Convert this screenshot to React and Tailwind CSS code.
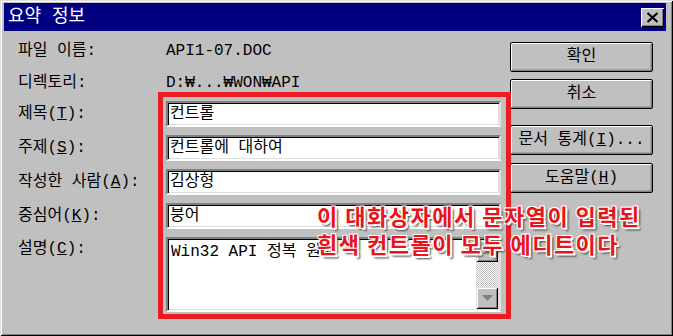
import React from "react";

const font = "font-['Liberation_Mono','Noto_Sans_CJK_KR',monospace]";

const Edit = ({ children }) => (
  <div className="w-[335px] h-[26px] bg-white border-2 border-t-[#808080] border-l-[#808080] border-b-white border-r-[#dfdfdf] shadow-[inset_1px_1px_#000,inset_-1px_-1px_#dfdfdf] flex items-center pl-[2px] text-[16px] text-black leading-none">
    {children}
  </div>
);

const Label = ({ children, className = "" }) => (
  <div className={`w-[148px] shrink-0 text-[16px] text-black leading-none ${className}`}>
    {children}
  </div>
);

const Button = ({ children, className = "" }) => (
  <button
    type="button"
    className={`w-[143px] h-[30px] bg-[#c0c0c0] border border-black rounded-[2px] shadow-[inset_1px_1px_#fff,inset_-1px_-1px_#808080,inset_-2px_-2px_#a0a0a0] flex items-center justify-center text-[16px] text-black leading-none ${className}`}
  >
    {children}
  </button>
);

const ScrollBtn = ({ up, className = "" }) => (
  <div
    className={`w-full h-[22px] bg-[#c0c0c0] shadow-[inset_1px_1px_#dfdfdf,inset_-1px_-1px_#000,inset_2px_2px_#fff,inset_-2px_-2px_#808080] flex items-center justify-center ${className}`}
  >
    <svg width="11" height="6" viewBox="0 0 11 6">
      {up ? (
        <path d="M5.5 0 L11 6 L0 6 Z" fill="#808080" />
      ) : (
        <path d="M0 0 L11 0 L5.5 6 Z" fill="#808080" />
      )}
    </svg>
  </div>
);

export default function App() {
  return (
    <div
      className={`${font} relative w-[673px] h-[336px] bg-[#c0c0c0] pt-[3px] pl-[4px] pr-[7px] shadow-[inset_1px_1px_#dfdfdf,inset_-1px_-1px_#000,inset_2px_2px_#fff,inset_-2px_-2px_#808080] overflow-hidden`}
    >
      {/* title bar */}
      <div className="h-[28px] bg-[#000080] flex items-center justify-between pl-[4px] pr-[2px]">
        <span className="text-white text-[18px] leading-none">요약 정보</span>
        <div className="w-[23px] h-[19px] bg-[#c0c0c0] shadow-[inset_1px_1px_#fff,inset_-1px_-1px_#000,inset_-2px_-2px_#808080] flex items-center justify-center">
          <svg width="13" height="11" viewBox="0 0 13 11">
            <path d="M1.5 1 L11.5 10 M11.5 1 L1.5 10" stroke="#000" strokeWidth="2.2" />
          </svg>
        </div>
      </div>

      <div className="flex">
        {/* fields */}
        <div className="pl-[14px] flex flex-col">
          <div className="mt-[6px] h-[28px] flex items-center">
            <Label>파일 이름:</Label>
            <span className="text-[16px] text-black leading-none">API1-07.DOC</span>
          </div>
          <div className="mt-[4px] h-[28px] flex items-center">
            <Label>디렉토리:</Label>
            <span className="text-[16px] text-black leading-none">D:₩...₩WON₩API</span>
          </div>
          <div className="mt-[4px] flex items-center">
            <Label>
              제목(<u>T</u>):
            </Label>
            <Edit>컨트롤</Edit>
          </div>
          <div className="mt-[8px] flex items-center">
            <Label>
              주제(<u>S</u>):
            </Label>
            <Edit>컨트롤에 대하여</Edit>
          </div>
          <div className="mt-[8px] flex items-center">
            <Label>
              작성한 사람(<u>A</u>):
            </Label>
            <Edit>김상형</Edit>
          </div>
          <div className="mt-[8px] flex items-center">
            <Label>
              중심어(<u>K</u>):
            </Label>
            <Edit>붕어</Edit>
          </div>
          <div className="mt-[8px] flex items-start">
            <Label className="pt-[4px]">
              설명(<u>C</u>):
            </Label>
            <div className="w-[335px] h-[75px] bg-white border-2 border-t-[#808080] border-l-[#808080] border-b-white border-r-[#dfdfdf] shadow-[inset_1px_1px_#000,inset_-1px_-1px_#dfdfdf] flex">
              <div className="flex-1 pl-[3px] pt-[3px] text-[16px] text-black leading-[20px]">
                Win32 API 정복 원고
              </div>
              <div className="w-[23px] flex flex-col pt-[1px] pb-[1px] pr-[1px]">
                <ScrollBtn up />
                <div className="flex-1 bg-[repeating-conic-gradient(#ffffff_0_25%,#c0c0c0_0_50%)] bg-[length:2px_2px]" />
                <ScrollBtn />
              </div>
            </div>
          </div>
        </div>

        {/* buttons */}
        <div className="ml-[9px] flex flex-col">
          <Button className="mt-[11px]">확인</Button>
          <Button className="mt-[7px]">취소</Button>
          <Button className="mt-[16px]">
            문서 통계(<u>I</u>)...
          </Button>
          <Button className="mt-[8px]">
            도움말(<u>H</u>)
          </Button>
        </div>
      </div>

      {/* annotation */}
      <div className="absolute left-[158px] top-[92px] w-[353px] h-[227px] border-[5px] border-[#ec1c24] pointer-events-none" />
      <div className="absolute left-[317px] top-[201px] font-['Noto_Sans_CJK_KR',sans-serif] font-bold text-[22px] leading-[28px] text-[#e8141c] tracking-[1.5px] [text-shadow:-1px_-1px_0_#fff,1px_-1px_0_#fff,-1px_1px_0_#fff,1px_1px_0_#fff,2px_2px_0_#fff,3px_3px_2px_#404040] pointer-events-none whitespace-nowrap">
        <div>이 대화상자에서 문자열이 입력된</div>
        <div>흰색 컨트롤이 모두 에디트이다</div>
      </div>
    </div>
  );
}
